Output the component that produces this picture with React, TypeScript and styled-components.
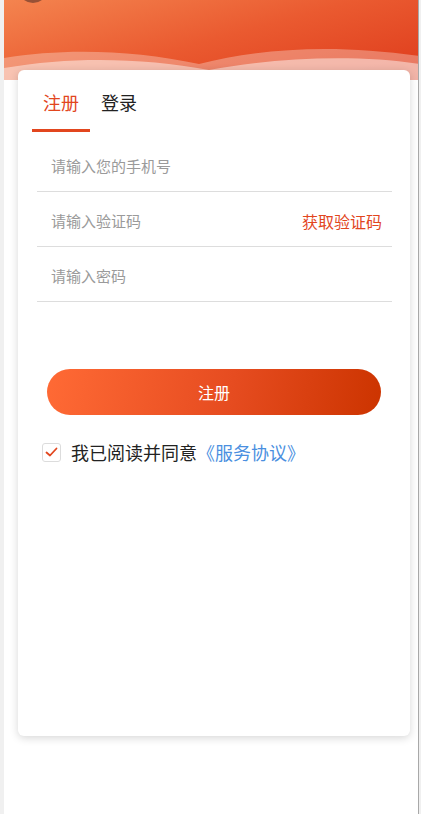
import React, { useState } from 'react';
import styled, { createGlobalStyle } from 'styled-components';

const GlobalStyle = createGlobalStyle`
  html, body {
    margin: 0;
    padding: 0;
    background: #f0f0f0;
    font-family: "Noto Sans CJK SC", "Noto Sans", sans-serif;
  }
  * {
    box-sizing: border-box;
  }
`;

const Page = styled.div`
  position: relative;
  margin-left: 4px;
  width: 415px;
  min-height: 100vh;
  background: #ffffff;
  border-right: 1px solid #a8a8a8;
  overflow: hidden;
`;

const Header = styled.div`
  position: relative;
  height: 80px;
  background: linear-gradient(165deg, #f4844f 0%, #ea5a30 50%, #de3b1b 100%);
`;

const BackDot = styled.div`
  position: absolute;
  left: 14px;
  top: -27px;
  width: 30px;
  height: 30px;
  border-radius: 50%;
  background: rgba(90, 50, 40, 0.6);
`;

const Waves = styled.svg`
  position: absolute;
  left: 0;
  bottom: 0;
  display: block;
`;

const Card = styled.div`
  position: relative;
  margin: -10px 8px 0 14px;
  height: 666px;
  background: #ffffff;
  border-radius: 6px;
  box-shadow: 0 2px 8px rgba(0, 0, 0, 0.16);
`;

const Tabs = styled.div`
  display: flex;
  padding: 13px 0 0 14px;
`;

const Tab = styled.div<{ active: boolean }>`
  width: 58px;
  padding: 0 0 8px 11px;
  font-size: 18px;
  line-height: 38px;
  color: ${p => (p.active ? '#e2461e' : '#222222')};
  border-bottom: 3px solid ${p => (p.active ? '#e2461e' : 'transparent')};
  cursor: pointer;
`;

const Form = styled.div`
  margin: 5px 18px 0 19px;
`;

const Row = styled.div`
  display: flex;
  align-items: center;
  height: 55px;
  padding: 3px 10px 0 14px;
  border-bottom: 1px solid #dddddd;
`;

const Input = styled.input`
  flex: 1;
  min-width: 0;
  border: none;
  outline: none;
  padding: 0;
  font-family: inherit;
  font-size: 15px;
  color: #333;
  background: transparent;

  &::placeholder {
    color: #9a9a9a;
  }
`;

const CodeLink = styled.span`
  font-size: 16px;
  color: #e2461e;
`;

const Submit = styled.button`
  display: block;
  margin: 67px 28px 0 29px;
  width: 334px;
  height: 46px;
  border: none;
  border-radius: 23px;
  background: linear-gradient(100deg, #ff6a35 0%, #e64c20 55%, #cc3400 100%);
  color: #ffffff;
  font-family: inherit;
  font-size: 16px;
  cursor: pointer;
`;

const Agree = styled.div`
  display: flex;
  align-items: center;
  margin: 24px 0 0 24px;
  font-size: 18px;
  color: #222222;
`;

const Box = styled.div`
  width: 19px;
  height: 19px;
  margin-right: 10px;
  border: 1px solid #dcdcdc;
  border-radius: 3px;
  display: flex;
  align-items: center;
  justify-content: center;
`;

const Protocol = styled.span`
  color: #4a8fe0;
`;

export default function App() {
  const [tab, setTab] = useState(0);

  return (
    <>
      <GlobalStyle />
      <Page>
        <Header>
          <BackDot />
          <Waves width="415" height="40" viewBox="0 0 415 40">
            <path
              d="M0 18 C 60 8, 130 10, 195 24 C 260 8, 330 4, 415 16 L415 40 L0 40 Z"
              fill="rgba(255,255,255,0.3)"
            />
            <path
              d="M0 28 C 70 16, 140 18, 205 30 C 270 18, 350 14, 415 24 L415 40 L0 40 Z"
              fill="rgba(255,255,255,0.45)"
            />
          </Waves>
        </Header>
        <Card>
          <Tabs>
            <Tab active={tab === 0} onClick={() => setTab(0)}>注册</Tab>
            <Tab active={tab === 1} onClick={() => setTab(1)}>登录</Tab>
          </Tabs>
          <Form>
            <Row>
              <Input placeholder="请输入您的手机号" />
            </Row>
            <Row>
              <Input placeholder="请输入验证码" />
              <CodeLink>获取验证码</CodeLink>
            </Row>
            <Row>
              <Input type="password" placeholder="请输入密码" />
            </Row>
          </Form>
          <Submit>注册</Submit>
          <Agree>
            <Box>
              <svg width="13" height="10" viewBox="0 0 13 10">
                <polyline
                  points="1.5,5.5 5,8.5 11.5,1.5"
                  fill="none"
                  stroke="#e2461e"
                  strokeWidth="1.8"
                  strokeLinecap="round"
                  strokeLinejoin="round"
                />
              </svg>
            </Box>
            我已阅读并同意<Protocol>《服务协议》</Protocol>
          </Agree>
        </Card>
      </Page>
    </>
  );
}
